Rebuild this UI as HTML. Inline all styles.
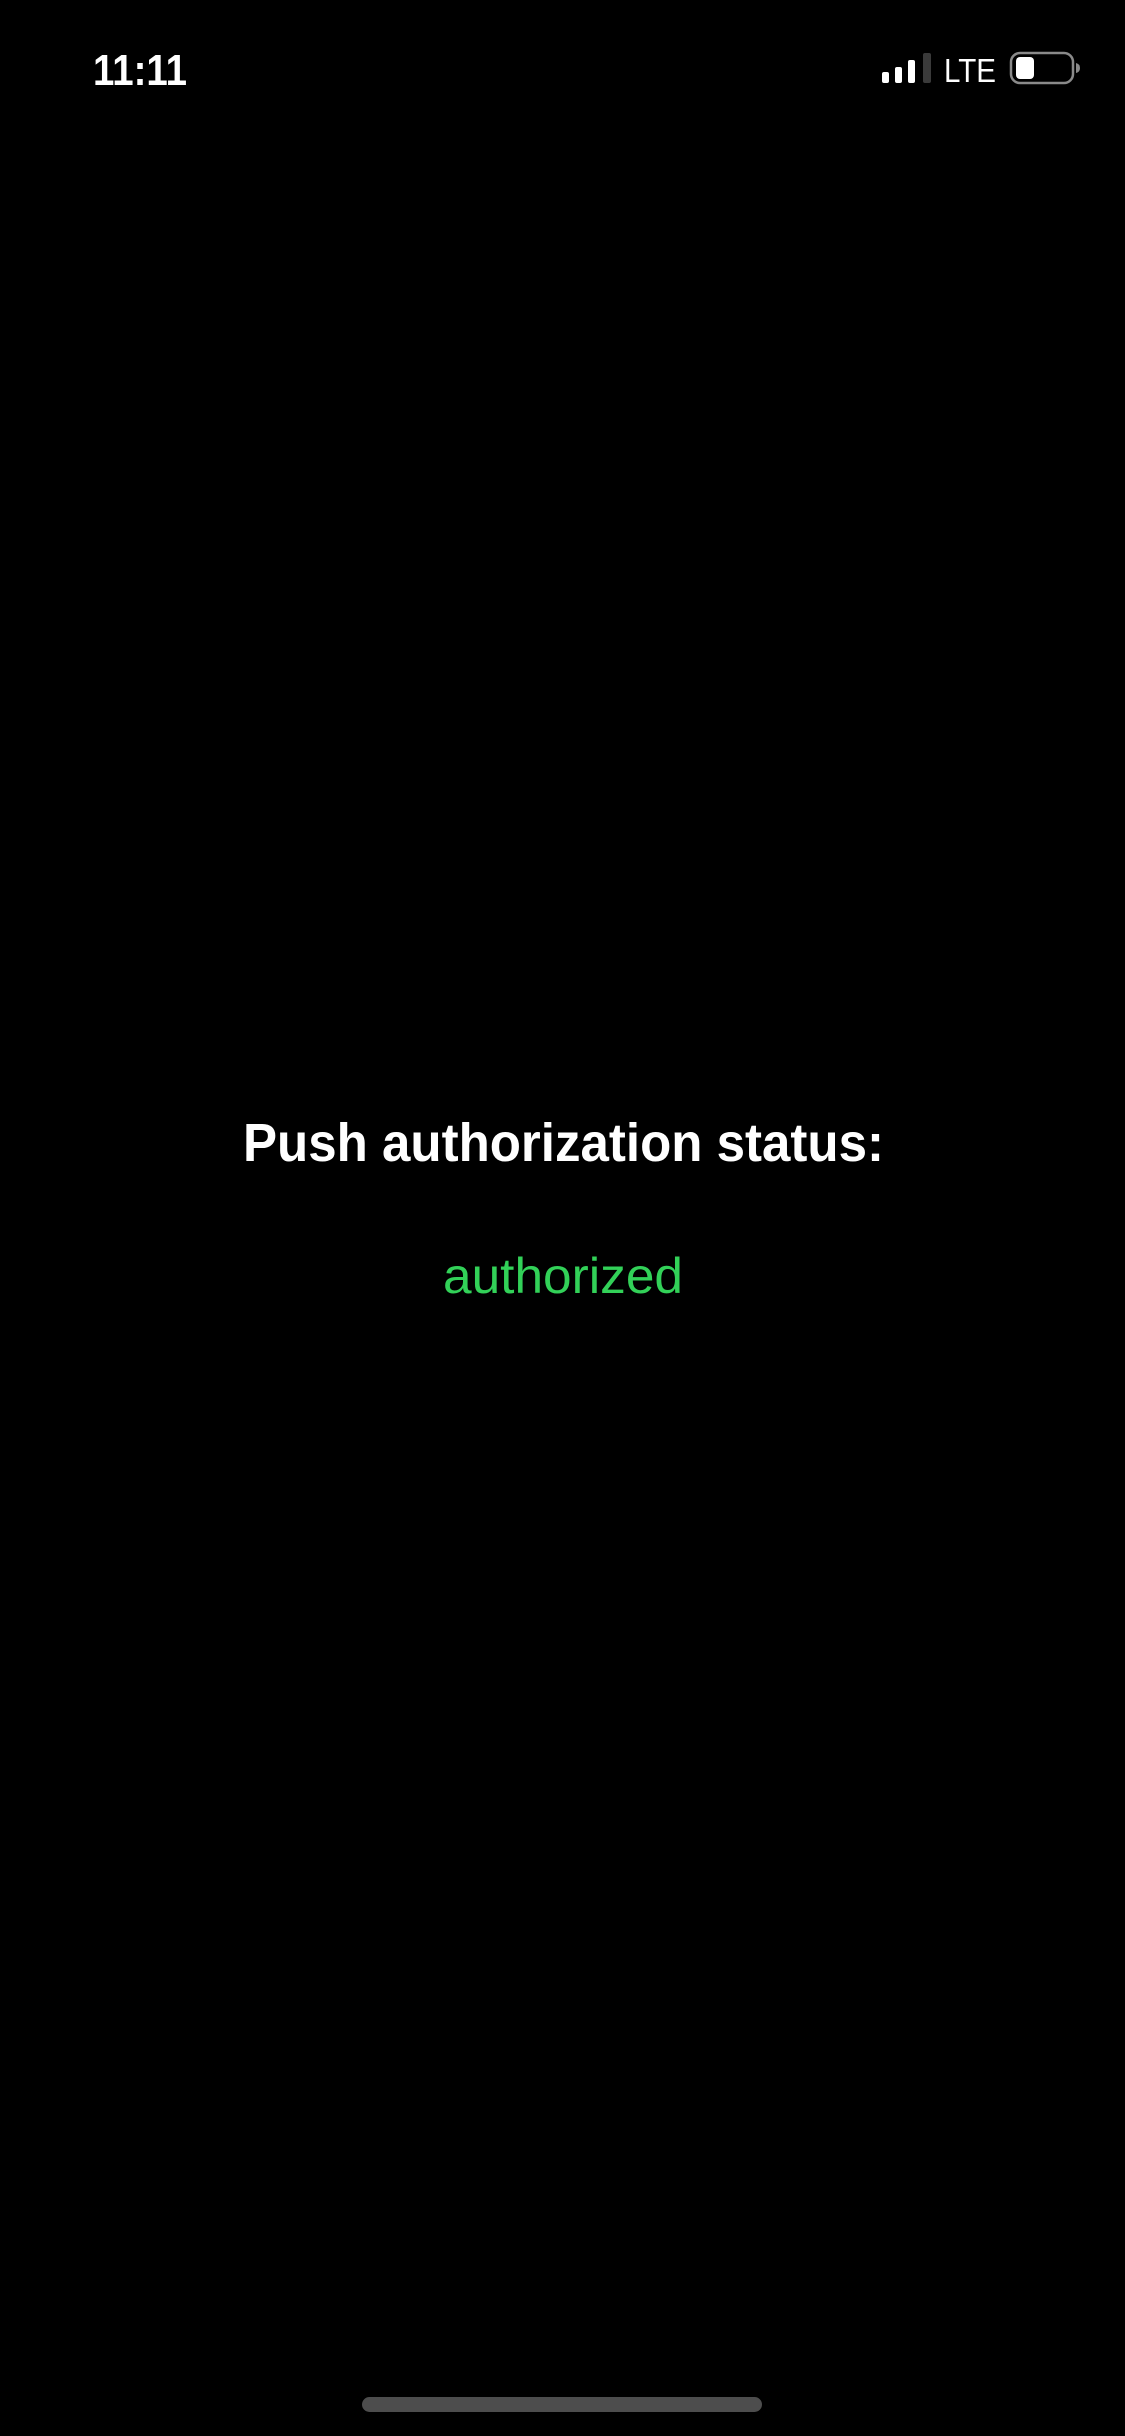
<!DOCTYPE html>
<html><head><meta charset="utf-8"><style>
html,body{margin:0;padding:0;background:#000;width:1125px;height:2436px;overflow:hidden}
svg{display:block}
</style></head><body>
<svg width="1125" height="2436" viewBox="0 0 1125 2436" xmlns="http://www.w3.org/2000/svg">
<rect width="1125" height="2436" fill="#000"/>
<text x="93" y="85" font-family="Liberation Sans, sans-serif" font-weight="bold" font-size="44" fill="#fff" textLength="94" lengthAdjust="spacingAndGlyphs">11:11</text>
<rect x="882" y="72" width="7" height="11" rx="2" fill="#fff"/>
<rect x="895" y="67" width="7" height="16" rx="2" fill="#fff"/>
<rect x="908" y="60" width="7" height="23" rx="2" fill="#fff"/>
<rect x="923" y="53" width="8" height="30" rx="2" fill="#3a3a3a"/>
<text x="944" y="82" font-family="Liberation Sans, sans-serif" font-size="33" fill="#fff" textLength="52" lengthAdjust="spacingAndGlyphs">LTE</text>
<rect x="1011" y="53" width="62" height="30" rx="9" fill="none" stroke="#8a8a8a" stroke-width="2.5"/>
<rect x="1016" y="57" width="18" height="22" rx="4" fill="#fff"/>
<path d="M1076 63 Q1080 64 1080 68 Q1080 72 1076 73 Z" fill="#8a8a8a"/>
<text x="243" y="1161" font-family="Liberation Sans, sans-serif" font-weight="bold" font-size="54" fill="#fff" textLength="641" lengthAdjust="spacingAndGlyphs">Push authorization status:</text>
<text x="443" y="1293" font-family="Liberation Sans, sans-serif" font-size="50" fill="#32d158" textLength="240" lengthAdjust="spacingAndGlyphs">authorized</text>
<rect x="362" y="2397" width="400" height="15" rx="7.5" fill="#4d4d4d"/>
</svg>
</body></html>
